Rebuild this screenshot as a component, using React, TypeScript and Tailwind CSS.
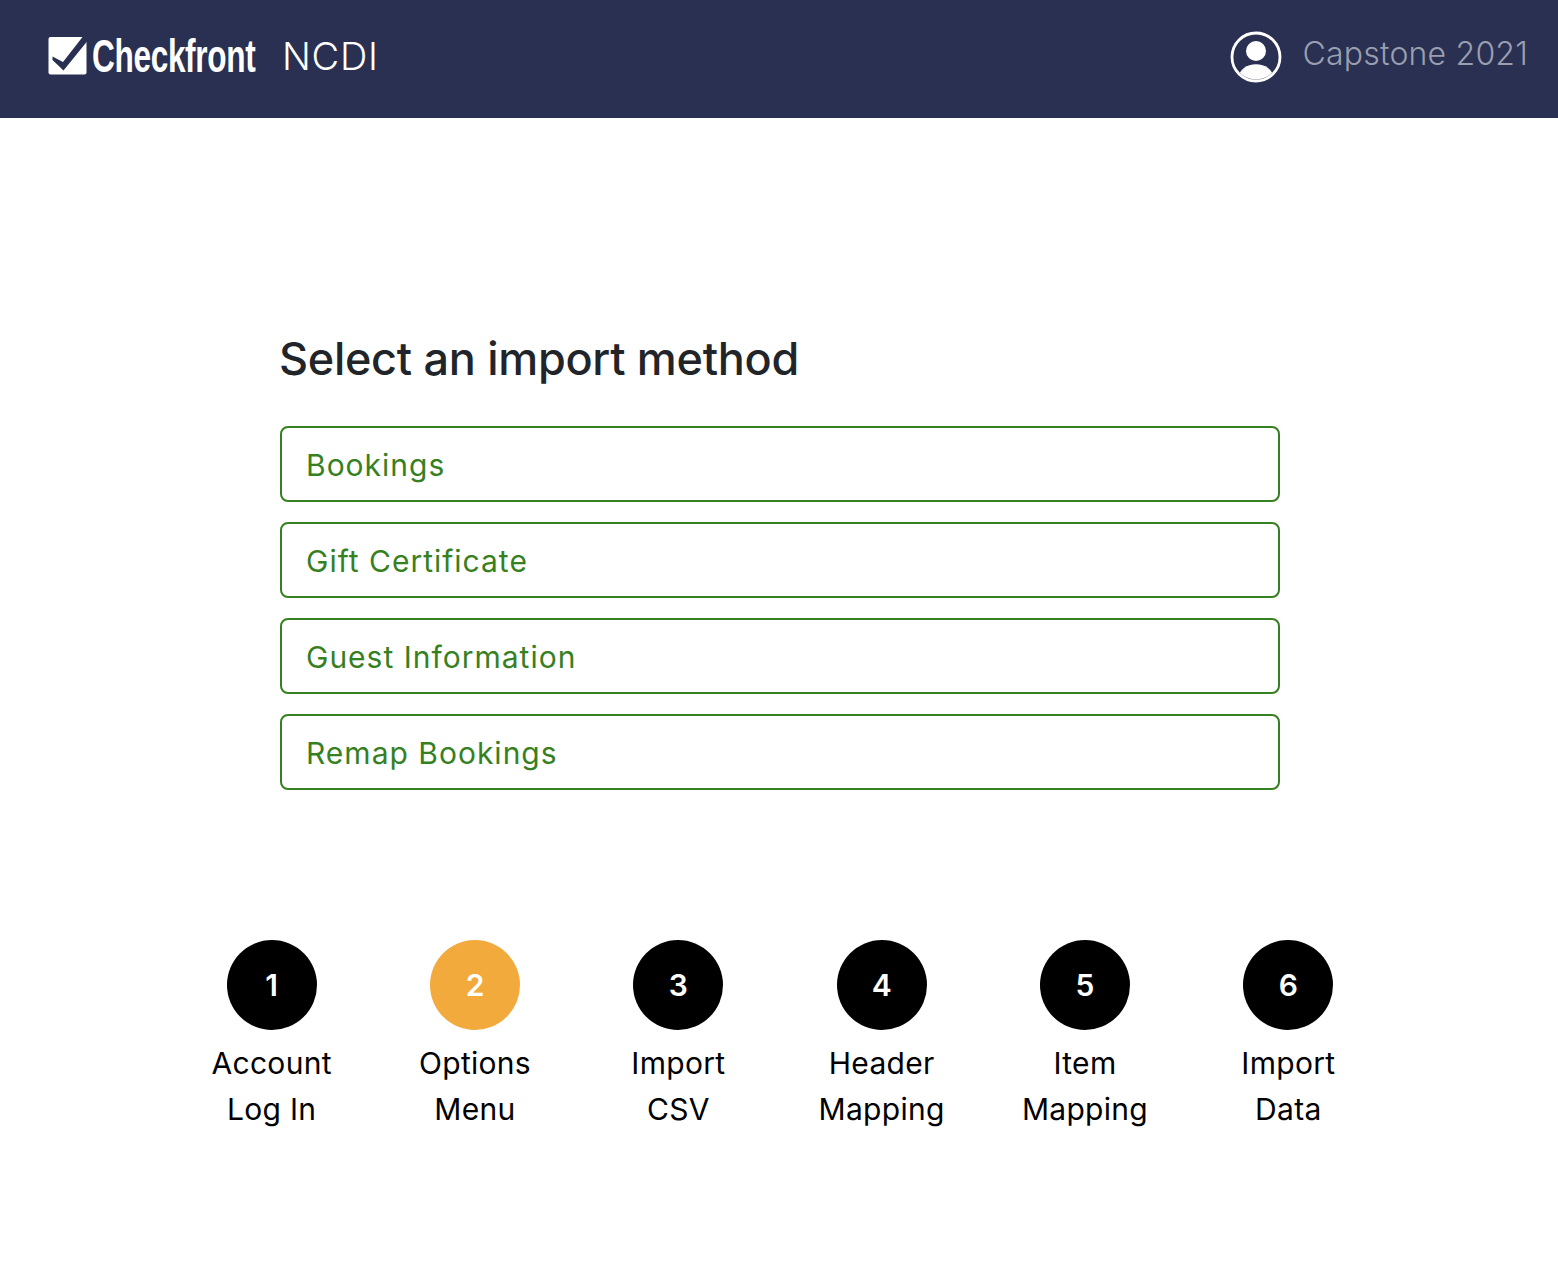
import React from "react";

const methods = ["Bookings", "Gift Certificate", "Guest Information", "Remap Bookings"];

const steps = [
  { label: "Account", sub: "Log In" },
  { label: "Options", sub: "Menu", active: true },
  { label: "Import", sub: "CSV" },
  { label: "Header", sub: "Mapping" },
  { label: "Item", sub: "Mapping" },
  { label: "Import", sub: "Data" },
];

const Logo = () => (
  <div className="mb-[3px] flex items-center">
    <svg width="39" height="38" viewBox="0 0 39 38" className="shrink-0">
      <rect x="0.5" width="38" height="37.5" rx="2" fill="#fff" />
      <path d="M4.5 19.5L15 25L34.5 0H39V4.5L15.5 33.5L4.5 23Z" fill="#293052" />
    </svg>
    <div className="ml-[5px] w-[164px]">
      <span className="inline-block origin-left scale-x-[0.672] whitespace-nowrap font-['Liberation_Sans',sans-serif] text-[47px] leading-[47px] font-bold tracking-[-0.5px] text-white">
        Checkfront
      </span>
    </div>
  </div>
);

const UserIcon = () => (
  <svg width="52" height="52" viewBox="0 0 52 52" className="mb-[1px]">
    <defs>
      <clipPath id="avatar-clip">
        <circle cx="26" cy="26" r="22.5" />
      </clipPath>
    </defs>
    <circle cx="26" cy="26" r="24" fill="none" stroke="#fff" strokeWidth="2.8" />
    <circle cx="26" cy="20" r="10" fill="#fff" />
    <ellipse cx="26" cy="46" rx="17" ry="12.7" fill="#fff" clipPath="url(#avatar-clip)" />
  </svg>
);

export default function App() {
  return (
    <div className="min-h-[1276px] bg-white font-['Inter',sans-serif]">
      <header className="flex h-[118px] items-center justify-between bg-[#293052] pr-[30px] pb-[4px] pl-[48px]">
        <div className="flex items-center">
          <Logo />
          <span className="mb-[2px] ml-[26px] text-[38px] font-light tracking-[0.7px] text-white">NCDI</span>
        </div>
        <div className="flex items-center">
          <UserIcon />
          <span className="mb-[6px] ml-[20px] text-[32px] font-light tracking-[0.2px] text-[#9a9fb0]">
            Capstone 2021
          </span>
        </div>
      </header>

      <main className="mx-auto w-[1000px] translate-x-px pt-[208px]">
        <h1 className="-ml-px text-[45px] leading-[66px] font-medium tracking-[-0.3px] text-[#212529]">
          Select an import method
        </h1>
        <div className="mt-[34px] flex flex-col gap-5">
          {methods.map((m) => (
            <button
              key={m}
              className="h-[76px] w-full rounded-[8px] border-2 border-[#37801f] bg-white px-[24px] pt-[2px] text-left text-[30px] tracking-[1px] text-[#37801f]"
            >
              {m}
            </button>
          ))}
        </div>

        <div className="mt-[150px] -ml-[110px] grid w-[1220px] grid-cols-6">
          {steps.map((s, i) => (
            <div key={i} className="flex flex-col items-center">
              <div
                className={`flex h-[90px] w-[90px] items-center justify-center rounded-full text-[30px] font-semibold text-white ${
                  s.active ? "bg-[#f2aa3c]" : "bg-black"
                }`}
              >
                {i + 1}
              </div>
              <div className="mt-[10px] text-center text-[30px] leading-[46px] tracking-[0.3px] text-black">
                <div>{s.label}</div>
                <div>{s.sub}</div>
              </div>
            </div>
          ))}
        </div>
      </main>
    </div>
  );
}
